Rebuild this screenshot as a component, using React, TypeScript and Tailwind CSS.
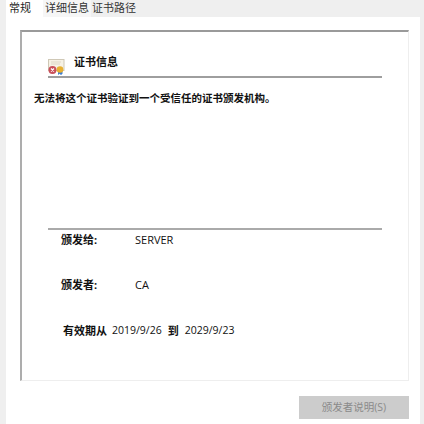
const FONT = "font-['Open_Sans','Noto_Sans_CJK_SC',sans-serif]";

function CertIcon() {
  return (
    <svg width="17" height="16" viewBox="0 0 17 16" className="shrink-0">
      <rect x="0.5" y="0.5" width="15.500" height="11" fill="#f6f1e4" stroke="#cfc8b6" />
      <path d="M3 3h10M3 5h9" stroke="#ded7c6" strokeWidth="1" />
      <circle cx="4.500" cy="11" r="4" fill="#c8505a" />
      <path d="M3 9.500l3 3M6 9.500l-3 3" stroke="#fff" strokeWidth="1.200" />
      <path d="M10 12v4l1.500-1.200 1.500 1.200 1.500-1.200 0-2.800z" fill="#3f7fd0" />
      <circle cx="12" cy="10.500" r="3.300" fill="#e8b030" />
    </svg>
  );
}

function Row({ label, value }: { label: string; value: string }) {
  return (
    <div className="flex items-center h-[16px] pl-[13px]">
      <span className="w-[74px] font-bold text-[11px]">{label}</span>
      <span className="text-[11px]">{value}</span>
    </div>
  );
}

export default function App() {
  return (
    <div className={`${FONT} w-[424px] h-[424px] overflow-hidden flex flex-col bg-[#efefef] text-[#111] text-[11px]`}>
      <div className="h-[17px] flex items-start shrink-0 leading-[15px]">
        <div className="ml-[6px] pl-[3px] w-[37px] h-[17px] bg-white text-[#222]">常规</div>
        <div className="pl-[2px] w-[48px] h-[17px] bg-[#f6f6f6] text-[#333]">详细信息</div>
        <div className="pl-[1px] w-[46px] h-[17px] text-[#333]">证书路径</div>
      </div>
      <div className="flex-1 ml-[6px] mr-[4px] bg-white pl-[14px] pr-[11px] pt-[13px]">
        <div className="h-[351px] border-t-2 border-l-2 border-r border-b border-t-[#9a9a9a] border-l-[#adadad] border-r-[#eeeeee] border-b-[#eeeeee] pl-[12px] pr-[26px] flex flex-col">
          <div className="ml-[14px] h-[43px] flex items-end pb-[1px] border-b-2 border-[#9e9e9e] box-content">
            <CertIcon />
            <span className="ml-[9px] mb-[5px] font-bold leading-[16px]">证书信息</span>
          </div>
          <div className="mt-[12px] font-bold leading-[16px] text-[10.5px]">无法将这个证书验证到一个受信任的证书颁发机构。</div>
          <div className="ml-[14px] mt-[122px] border-t-2 border-[#aaaaaa] pt-[2px] flex flex-col">
            <Row label="颁发给:" value="SERVER" />
            <div className="mt-[29px]">
              <Row label="颁发者:" value="CA" />
            </div>
            <div className="mt-[30px] flex items-center h-[16px] pl-[15px] gap-[5px]">
              <span className="font-bold">有效期从</span>
              <span className="text-[10.5px]">2019/9/26</span>
              <span className="font-bold mx-[1px]">到</span>
              <span className="text-[10.5px]">2029/9/23</span>
            </div>
          </div>
        </div>
        <div className="mt-[15px] flex justify-end">
          <div className="w-[110px] h-[23px] bg-[#cccccc] text-[#8a8a8a] text-[10.5px] flex items-center justify-center">颁发者说明(S)</div>
        </div>
      </div>
    </div>
  );
}
